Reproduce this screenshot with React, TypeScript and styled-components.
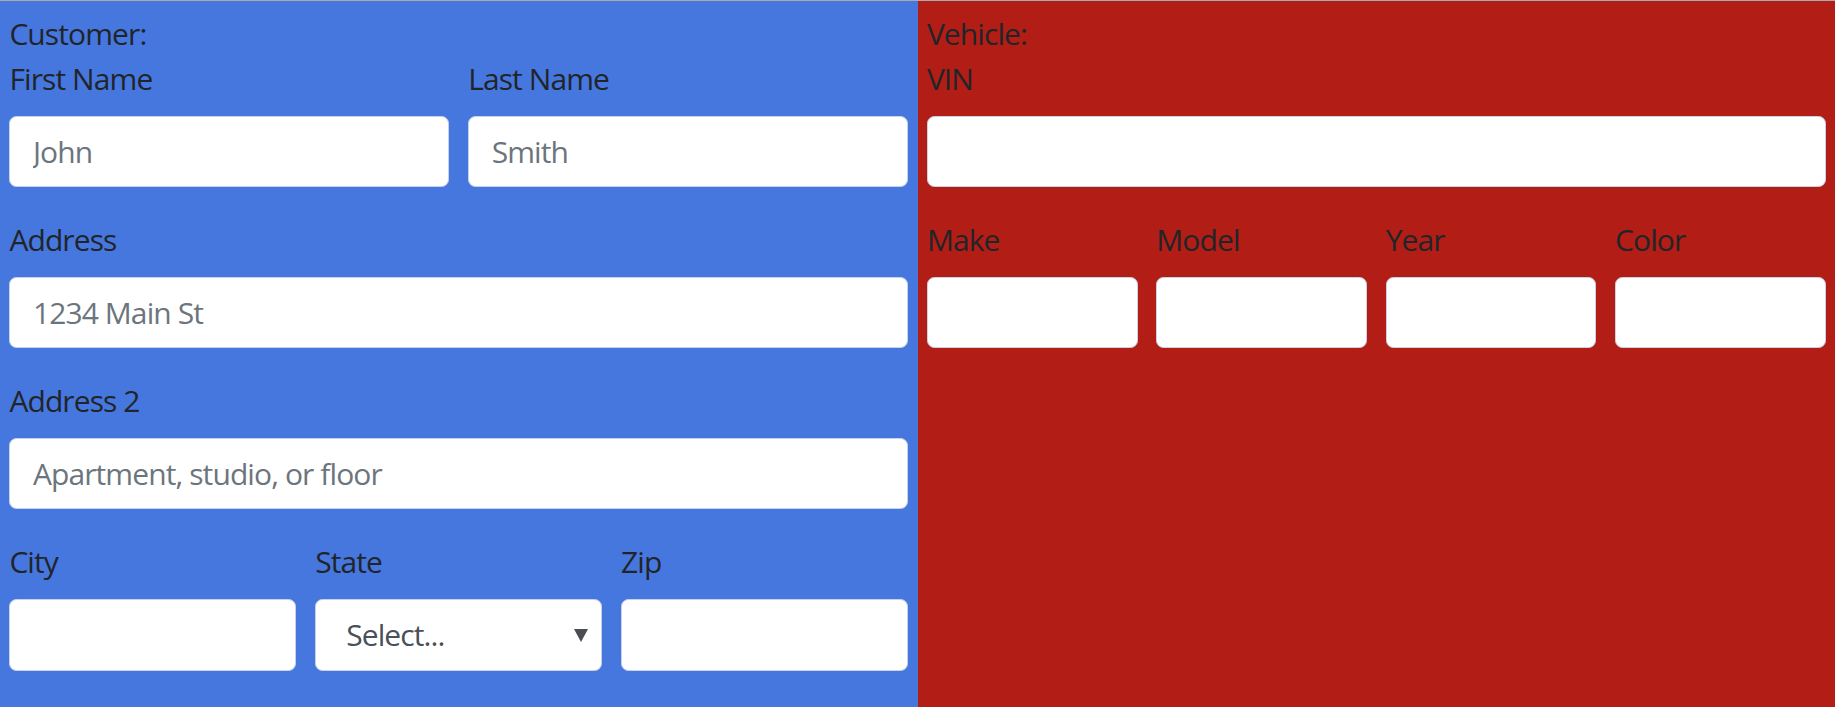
import React from "react";
import styled, { createGlobalStyle } from "styled-components";

const GlobalStyle = createGlobalStyle`
  html, body { margin: 0; padding: 0; }
  body {
    border-top: 1px solid rgba(140, 140, 140, 0.75);
    font-family: "Segoe UI", "Open Sans", "Noto Sans", sans-serif;
    font-size: 30px;
    line-height: 1.5;
    letter-spacing: -0.9px;
    color: #212529;
    background: #fff;
  }
  * { box-sizing: border-box; }
`;

const Page = styled.div`
  display: grid;
  grid-template-columns: 1fr 1fr;
  min-height: 706px;
`;

const Panel = styled.section<{ $bg: string }>`
  background: ${(p) => p.$bg};
  padding: 9.5px 9.375px 0;
`;

const Heading = styled.div`
  font-size: 30px;
  line-height: 45px;
`;

const Row = styled.div<{ $cols: number }>`
  display: grid;
  grid-template-columns: repeat(${(p) => p.$cols}, 1fr);
  column-gap: 18.75px;
`;

const Group = styled.div`
  display: flex;
  flex-direction: column;
  margin-bottom: 30px;
  min-width: 0;
`;

const Label = styled.label`
  display: block;
  font-size: 30px;
  line-height: 45px;
  margin-bottom: 15px;
`;

const Input = styled.input`
  display: block;
  width: 100%;
  height: 71.25px;
  padding: 11.25px 22.5px;
  font-family: inherit;
  font-size: 30px;
  line-height: 45px;
  letter-spacing: -0.9px;
  color: #495057;
  background: #fff;
  border: 1.875px solid #c9d2e4;
  border-radius: 7.5px;
  outline: none;
  &::placeholder {
    color: #6c757d;
    opacity: 1;
  }
`;

const SelectWrap = styled.div`
  position: relative;
  &::after {
    content: "";
    position: absolute;
    right: 14px;
    top: 50%;
    margin-top: -6px;
    border-left: 7px solid transparent;
    border-right: 7px solid transparent;
    border-top: 13px solid #4a4e52;
    pointer-events: none;
  }
`;

const Select = styled.select`
  display: block;
  width: 100%;
  height: 71.25px;
  padding: 11.25px 40px 11.25px 30px;
  font-family: inherit;
  font-size: 30px;
  line-height: 45px;
  letter-spacing: -0.9px;
  color: #495057;
  background: #fff;
  border: 1.875px solid #c9d2e4;
  border-radius: 7.5px;
  appearance: none;
  -webkit-appearance: none;
  outline: none;
`;

export default function App() {
  return (
    <>
      <GlobalStyle />
      <Page>
        <Panel $bg="#4677df">
          <Heading>Customer:</Heading>
          <Row $cols={2}>
            <Group>
              <Label>First Name</Label>
              <Input placeholder="John" />
            </Group>
            <Group>
              <Label>Last Name</Label>
              <Input placeholder="Smith" />
            </Group>
          </Row>
          <Group>
            <Label>Address</Label>
            <Input placeholder="1234 Main St" />
          </Group>
          <Group>
            <Label>Address 2</Label>
            <Input placeholder="Apartment, studio, or floor" />
          </Group>
          <Row $cols={3}>
            <Group>
              <Label>City</Label>
              <Input />
            </Group>
            <Group>
              <Label>State</Label>
              <SelectWrap>
                <Select defaultValue="">
                  <option value="">Select...</option>
                </Select>
              </SelectWrap>
            </Group>
            <Group>
              <Label>Zip</Label>
              <Input />
            </Group>
          </Row>
        </Panel>
        <Panel $bg="#b21d15">
          <Heading>Vehicle:</Heading>
          <Group>
            <Label>VIN</Label>
            <Input />
          </Group>
          <Row $cols={4}>
            <Group>
              <Label>Make</Label>
              <Input />
            </Group>
            <Group>
              <Label>Model</Label>
              <Input />
            </Group>
            <Group>
              <Label>Year</Label>
              <Input />
            </Group>
            <Group>
              <Label>Color</Label>
              <Input />
            </Group>
          </Row>
        </Panel>
      </Page>
    </>
  );
}
